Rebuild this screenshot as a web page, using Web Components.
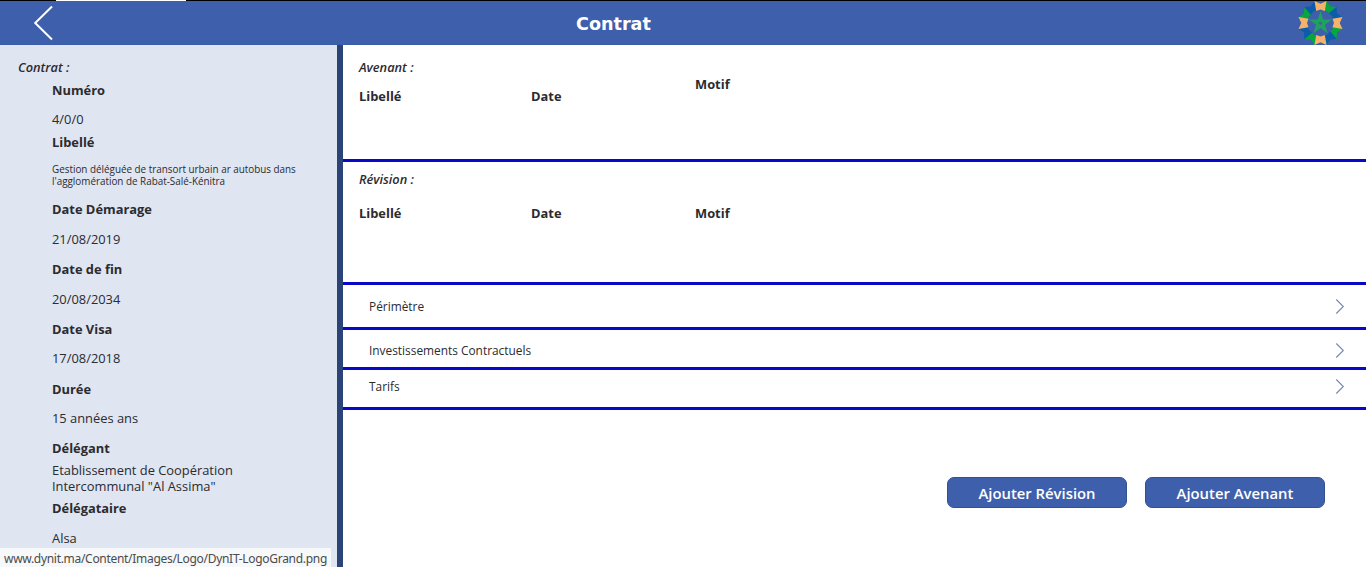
<!DOCTYPE html>
<html lang="fr">
<head>
<meta charset="utf-8">
<title>Contrat</title>
<style>
html,body{margin:0;height:100%;overflow:hidden;background:#fff}
body{font-family:"Open Sans","Noto Sans",sans-serif;font-size:12.880px;color:#2b2b30}
</style>
</head>
<body>
<contract-page></contract-page>
<script>
const define = (name, html) => customElements.define(name, class extends HTMLElement {
  constructor() {
    super();
    const t = document.createElement('template');
    t.innerHTML = html;
    this.attachShadow({ mode: 'open' }).appendChild(t.content.cloneNode(true));
  }
});

define('star-logo', `
<style>:host{display:block;width:46px;height:45px}svg{display:block}</style>
<svg width="46" height="45" viewBox="-22.500 -23 46 45">
  <defs><path id="p" d="M-6-22L0-19.200L6-22L4.300-12L0-13.500L-4.300-12Z"/></defs>
  <g fill="#06a83c"><use href="#p" transform="rotate(30)"/><use href="#p" transform="rotate(120)"/><use href="#p" transform="rotate(210)"/><use href="#p" transform="rotate(300)"/></g>
  <g fill="#0b5cab"><use href="#p" transform="rotate(60)"/><use href="#p" transform="rotate(150)"/><use href="#p" transform="rotate(240)"/><use href="#p" transform="rotate(330)"/></g>
  <g fill="#f6b26b"><use href="#p"/><use href="#p" transform="rotate(90)"/><use href="#p" transform="rotate(180)"/><use href="#p" transform="rotate(270)"/></g>
  <path d="M0-8L4.900 7L-7.900-2.300H7.900L-4.900 7Z" fill="none" stroke="#1fa35b" stroke-width="2.400"/>
</svg>`);

define('app-header', `
<style>
:host{display:grid;grid-template-columns:576px 1fr auto;height:45px;box-sizing:border-box;background:linear-gradient(90deg,#000 56px,#fff 56px 186px,#000 186px) 0 0/100% 1px no-repeat #3e5fab;color:#fff;align-items:center;border-bottom:1px solid #3b5ca6}
.back{display:block;padding-left:32px}
h1{margin:0;padding-top:2px;font:bold 17.600px/24px "DejaVu Sans",sans-serif}
star-logo{margin-right:22px}
</style>
<svg class="back" width="22" height="44" viewBox="0 0 22 44"><path d="M20 5.500L3.200 22L20 38.500" fill="none" stroke="#fff" stroke-width="2"/></svg>
<h1><slot></slot></h1>
<star-logo></star-logo>`);

define('section-title', `
<style>:host{display:block;font-style:italic;font-weight:600;font-size:12.800px;line-height:20px;height:20px}</style><slot></slot>`);

define('data-field', `
<style>
:host{display:block;height:60px}
.label{font-weight:700;line-height:20px}
.value{padding-top:var(--gap,10px);line-height:20px}
:host([kind=small]) .value{font-size:9.870px;line-height:12px}
:host([kind=double]) .value{line-height:16px}
</style>
<div class="label"><slot name="label"></slot></div><div class="value"><slot></slot></div>`);

define('side-panel', `
<style>
:host{display:block;box-sizing:border-box;padding:12px 0 0 18px;background:#dfe5f1;border-right:6px solid #2a4478;overflow:hidden}
.list{padding:3px 0 0 34px}
</style>
<section-title>Contrat :</section-title>
<div class="list">
<data-field style="height:52px;--gap:9px"><span slot="label">Numéro</span>4/0/0</data-field>
<data-field kind="small" style="height:67px;--gap:11px"><span slot="label">Libellé</span>Gestion déléguée de transort urbain ar autobus dans<br>l'agglomération de Rabat-Salé-Kénitra</data-field>
<data-field><span slot="label">Date Démarage</span>21/08/2019</data-field>
<data-field><span slot="label">Date de fin</span>20/08/2034</data-field>
<data-field style="--gap:9px"><span slot="label">Date Visa</span>17/08/2018</data-field>
<data-field style="height:59px;--gap:9px"><span slot="label">Durée</span>15 années ans</data-field>
<data-field kind="double" style="--gap:4px"><span slot="label">Délégant</span>Etablissement de Coopération<br>Intercommunal "Al Assima"</data-field>
<data-field><span slot="label">Délégataire</span>Alsa</data-field>
</div>`);

define('record-block', `
<style>
:host{display:block;box-sizing:border-box;padding-left:16px;border-bottom:3px solid #0808c8}
.cols{display:grid;grid-template-columns:172px 164px 1fr;font-weight:700;line-height:20px;padding-top:var(--gap,9px)}
.cols>:last-child{margin-top:var(--shift,0)}
</style>
<section-title><slot></slot></section-title>
<div class="cols"><span>Libellé</span><span>Date</span><span>Motif</span></div>`);

define('nav-row', `
<style>
:host{display:flex;justify-content:space-between;align-items:flex-start;box-sizing:border-box;padding:var(--top,12px) 21px 0 26px;border-bottom:3px solid #0808c8;font-size:11.880px;line-height:20px}
svg{display:block;margin-top:2px}
</style>
<span><slot></slot></span>
<svg width="10" height="16" viewBox="0 0 10 16"><path d="M1.300 1.500L8.300 8.500L1.300 15.500" fill="none" stroke="#7488ae" stroke-width="1.100"/></svg>`);

define('action-button', `
<style>
:host{display:block}
button{display:block;width:180px;height:31px;box-sizing:border-box;padding:1px 0 0;border:1px solid #34508f;border-radius:7px;background:#3e5fab;color:#fff;font:600 14.850px/27px "Open Sans",sans-serif}
</style><button><slot></slot></button>`);

define('main-panel', `
<style>
:host{display:block;background:#fff}
.actions{display:flex;justify-content:flex-end;gap:18px;padding:67px 41px 0 0}
</style>
<record-block style="height:117px;padding-top:12px;--shift:-12px">Avenant :</record-block>
<record-block style="height:123px;padding-top:7px;--gap:14px">Révision :</record-block>
<nav-row style="height:45px;--top:11px">Périmètre</nav-row>
<nav-row style="height:40px;--top:10px">Investissements Contractuels</nav-row>
<nav-row style="height:40px;--top:6px">Tarifs</nav-row>
<div class="actions"><action-button>Ajouter Révision</action-button><action-button>Ajouter Avenant</action-button></div>`);

define('status-tip', `
<style>:host{position:absolute;left:0;bottom:0;box-sizing:border-box;width:331px;height:19px;padding-left:4px;background:#f7f8fa;color:#4b4b4b;font:12px/21px "Noto Sans","Open Sans",sans-serif;letter-spacing:-.3px;white-space:nowrap}</style><slot></slot>`);

define('contract-page', `
<style>
:host{display:grid;grid-template:45px 1fr/343px 1fr;height:100vh;position:relative}
app-header{grid-column:1/-1}
</style>
<app-header>Contrat</app-header>
<side-panel></side-panel>
<main-panel></main-panel>
<status-tip>www.dynit.ma/Content/Images/Logo/DynIT-LogoGrand.png</status-tip>`);
</script>
</body>
</html>
